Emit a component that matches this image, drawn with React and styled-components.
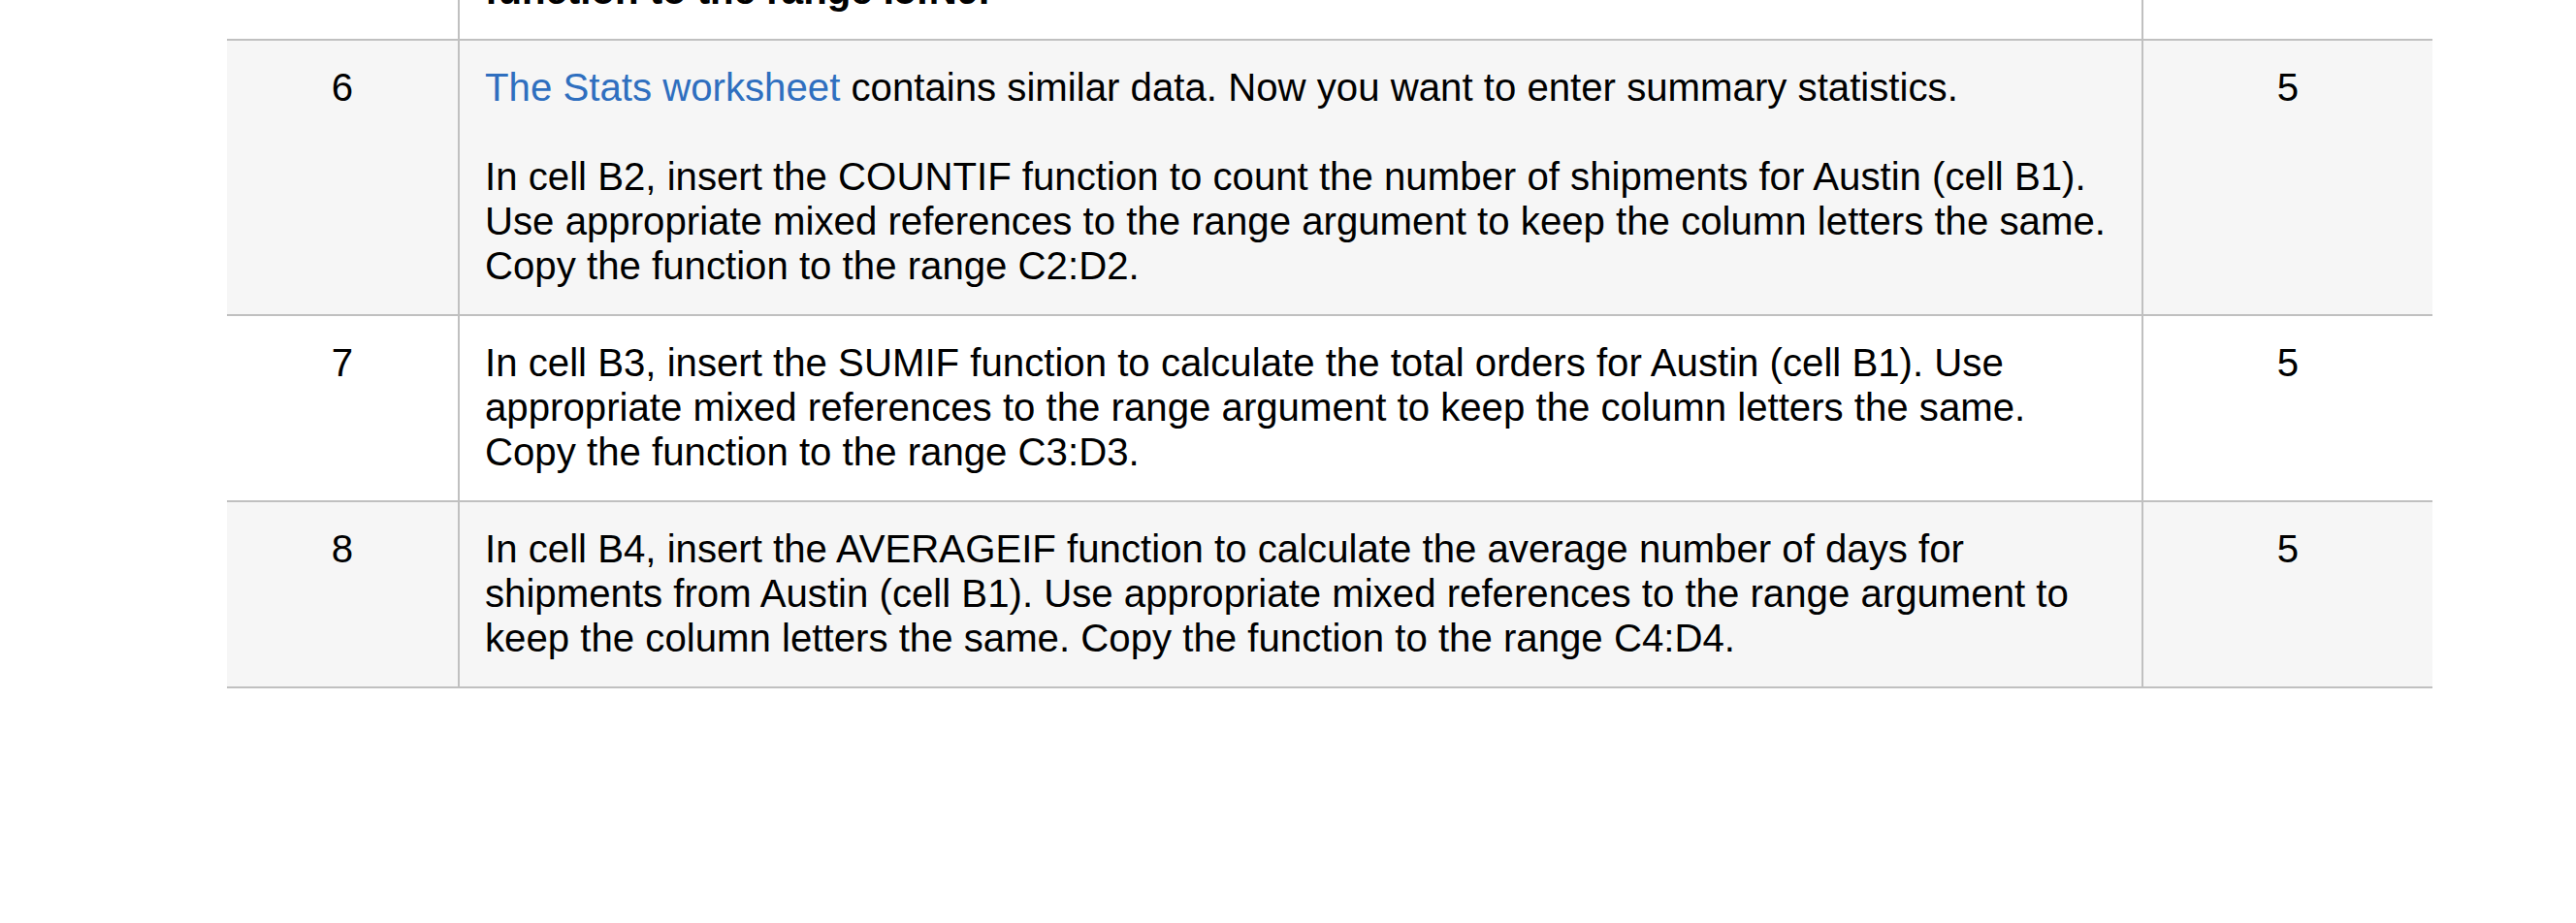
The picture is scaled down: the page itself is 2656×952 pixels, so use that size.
import styled, { createGlobalStyle } from "styled-components";

const GlobalStyle = createGlobalStyle`
  html, body {
    margin: 0;
    padding: 0;
    background: #ffffff;
  }
  body {
    font-family: "Liberation Sans", Arial, Helvetica, sans-serif;
    color: #000000;
  }
`;

const Page = styled.div`
  width: 2656px;
  height: 952px;
  overflow: hidden;
  padding-left: 234px;
  box-sizing: border-box;
`;

// the table is scrolled so only the tail of the previous step shows
const Table = styled.div`
  width: 2274px;
  margin-top: -58px;
  display: flex;
  flex-direction: column;
`;

const Row = styled.div`
  display: grid;
  grid-template-columns: 238px 1738px 298px;
  background: ${(p) => (p.$shaded ? "#f6f6f6" : "#ffffff")};
  border-bottom: 2px solid #c0c0c0;
`;

const Cell = styled.div`
  padding: 26px;
  font-size: 40.2px;
  line-height: 46px;
`;

const NumCell = styled(Cell)`
  text-align: center;
`;

const TextCell = styled(Cell)`
  border-left: 2px solid #c0c0c0;
  border-right: 2px solid #c0c0c0;
  white-space: nowrap;
  font-weight: ${(p) => (p.$bold ? 700 : 400)};
`;

const Para = styled.p`
  margin: 0;

  & + & {
    margin-top: 46px;
  }
`;

const Link = styled.a`
  color: #2f6fbf;
  text-decoration: none;
`;

const steps = [
  {
    step: "6",
    points: "5",
    shaded: true,
    paras: [
      [
        <>
          <Link href="#stats">The Stats worksheet</Link> contains similar data. Now you want to enter summary statistics.
        </>,
      ],
      [
        "In cell B2, insert the COUNTIF function to count the number of shipments for Austin (cell B1).",
        "Use appropriate mixed references to the range argument to keep the column letters the same.",
        "Copy the function to the range C2:D2.",
      ],
    ],
  },
  {
    step: "7",
    points: "5",
    shaded: false,
    paras: [
      [
        "In cell B3, insert the SUMIF function to calculate the total orders for Austin (cell B1). Use",
        "appropriate mixed references to the range argument to keep the column letters the same.",
        "Copy the function to the range C3:D3.",
      ],
    ],
  },
  {
    step: "8",
    points: "5",
    shaded: true,
    paras: [
      [
        "In cell B4, insert the AVERAGEIF function to calculate the average number of days for",
        "shipments from Austin (cell B1). Use appropriate mixed references to the range argument to",
        "keep the column letters the same. Copy the function to the range C4:D4.",
      ],
    ],
  },
];

function Lines({ lines }) {
  return lines.map((line, i) => (
    <span key={i}>
      {i > 0 && <br />}
      {line}
    </span>
  ));
}

export default function App() {
  return (
    <Page>
      <GlobalStyle />
      <Table>
        <Row>
          <NumCell />
          <TextCell $bold>function to the range I5:N9.</TextCell>
          <NumCell />
        </Row>
        {steps.map((s) => (
          <Row key={s.step} $shaded={s.shaded}>
            <NumCell>{s.step}</NumCell>
            <TextCell>
              {s.paras.map((lines, i) => (
                <Para key={i}>
                  <Lines lines={lines} />
                </Para>
              ))}
            </TextCell>
            <NumCell>{s.points}</NumCell>
          </Row>
        ))}
      </Table>
    </Page>
  );
}
